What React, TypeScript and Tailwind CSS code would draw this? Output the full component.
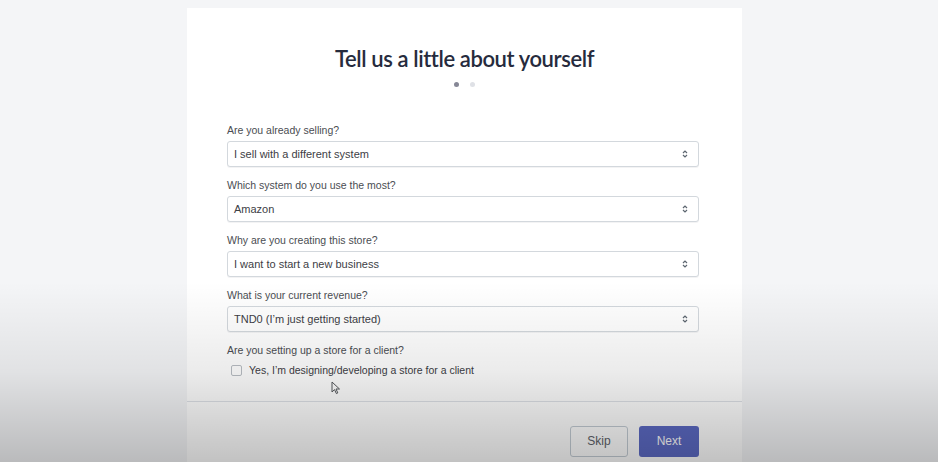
import React from 'react'

type Field = {
  label: string
  value: string
}

const fields: Field[] = [
  { label: 'Are you already selling?', value: 'I sell with a different system' },
  { label: 'Which system do you use the most?', value: 'Amazon' },
  { label: 'Why are you creating this store?', value: 'I want to start a new business' },
  { label: 'What is your current revenue?', value: 'TND0 (I’m just getting started)' },
]

function SelectArrows() {
  return (
    <svg width="8" height="10" viewBox="0 0 8 10" className="text-[#5d6670]">
      <path d="M2 4 L4 2 L6 4" fill="none" stroke="currentColor" strokeWidth="1.2" />
      <path d="M2 6 L4 8 L6 6" fill="none" stroke="currentColor" strokeWidth="1.2" />
    </svg>
  )
}

function FieldSelect({ field }: { field: Field }) {
  return (
    <div className="mb-[10px]">
      <div className="text-[10.5px] leading-[16px] text-[#4a4d52] mb-[3px]">{field.label}</div>
      <div className="h-[26px] flex items-center justify-between rounded-[3px] border border-[#d3d8dd] bg-white pl-[6px] pr-[9px] shadow-[0_1px_0_rgba(22,29,37,0.05)]">
        <span className="text-[11px] text-[#3d4045]">{field.value}</span>
        <SelectArrows />
      </div>
    </div>
  )
}

export default function App() {
  return (
    <div
      className="relative h-[462px] w-[938px] overflow-hidden bg-[#f4f5f7] pt-[8px]"
      style={{ fontFamily: '"Liberation Sans", Arial, sans-serif' }}
    >
      <div className="ml-[187px] w-[555px] bg-white">
        <div className="pt-[37px] flex flex-col items-center">
          <h1
            className="text-[22px] leading-[28px] font-semibold text-[#262b3d] tracking-[-0.4px]"
            style={{ fontFamily: 'Lato, "Open Sans", sans-serif' }}
          >
            Tell us a little about yourself
          </h1>
          <div className="mt-[9px] flex items-center gap-[11px]">
            <span className="h-[5px] w-[5px] rounded-full bg-[#868796]" />
            <span className="h-[5px] w-[5px] rounded-full bg-[#dfe1e6]" />
          </div>
        </div>

        <div className="pl-[40px] pr-[43px] pt-[35px]">
          {fields.map((f) => (
            <FieldSelect key={f.label} field={f} />
          ))}
          <div className="text-[10.5px] leading-[16px] text-[#4a4d52]">
            Are you setting up a store for a client?
          </div>
          <label className="mt-[5px] flex items-center gap-[7px] pl-[4px] pb-[22px]">
            <span className="h-[11px] w-[11px] rounded-[2px] border border-[#b9bec4] bg-white" />
            <span className="text-[10.5px] text-[#3d4045]">Yes, I’m designing/developing a store for a client</span>
          </label>
        </div>

        <div className="border-t border-[#dfe3e8] h-[70px] flex items-start justify-end gap-[11px] pr-[43px] pt-[24px]">
          <button className="h-[31px] w-[58px] rounded-[3px] border border-[#c4cdd5] bg-white text-[12px] text-[#5e6269]">
            Skip
          </button>
          <button className="h-[31px] w-[60px] rounded-[3px] bg-[#5c6ac4] text-[12px] text-white">
            Next
          </button>
        </div>
      </div>

      {/* mouse pointer */}
      <svg
        className="absolute left-[331px] top-[381px]"
        width="10"
        height="14"
        viewBox="0 0 10 14"
      >
        <path d="M1 1 L1 11 L3.5 8.6 L5.4 12.6 L6.8 11.9 L5 8 L8.5 8 Z" fill="white" stroke="#55585c" strokeWidth="1" />
      </svg>

      {/* video-frame darkening at the bottom */}
      <div className="pointer-events-none absolute inset-x-0 bottom-0 h-[180px] bg-gradient-to-b from-transparent via-[rgba(0,0,0,0.08)] to-[rgba(0,0,0,0.24)]" />
    </div>
  )
}
